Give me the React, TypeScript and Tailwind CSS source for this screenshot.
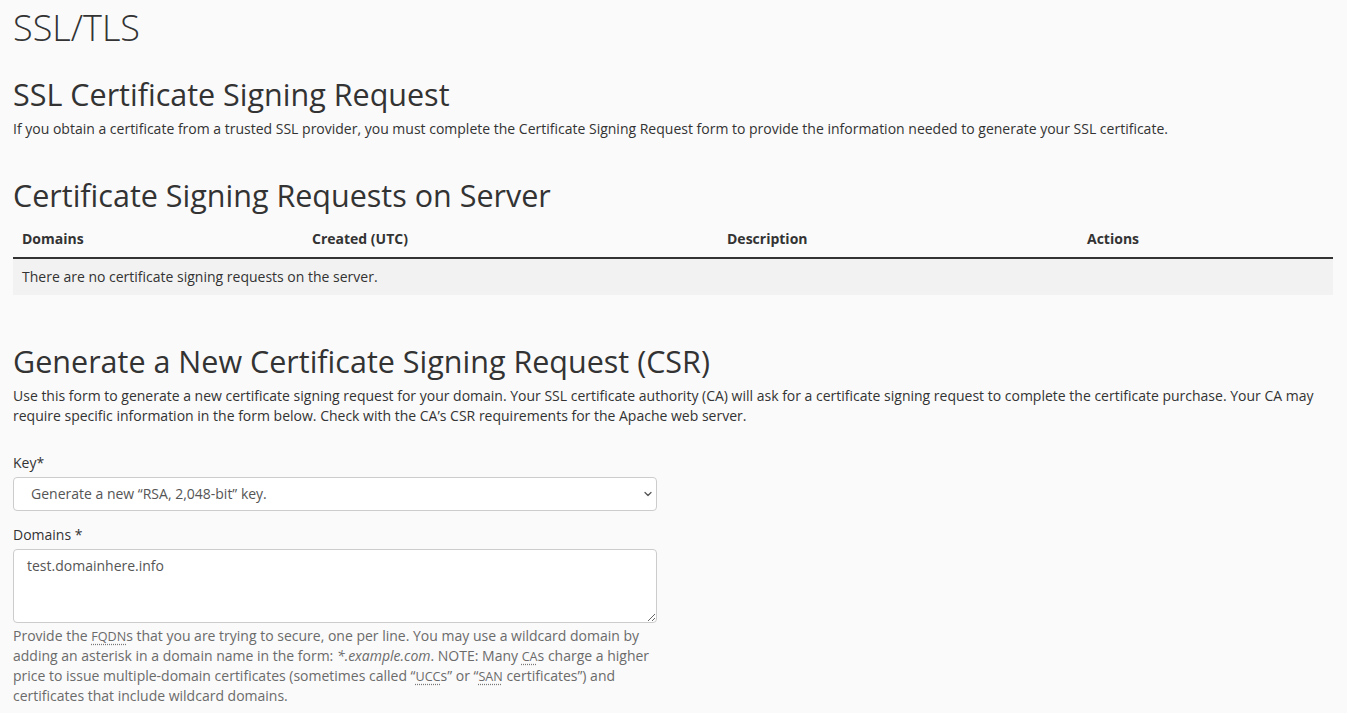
import { ChevronDown } from "lucide-react";

const Abbr = ({ children, title }: { children: React.ReactNode; title: string }) => (
  <abbr
    title={title}
    className="text-[90%] leading-none underline decoration-dotted decoration-[#777] underline-offset-[3px]"
  >
    {children}
  </abbr>
);

const columns = [
  { label: "Domains", width: "w-[290px]" },
  { label: "Created (UTC)", width: "w-[415px]" },
  { label: "Description", width: "w-[360px]" },
  { label: "Actions", width: "" },
];

export default function App() {
  return (
    <div
      className="min-h-screen bg-[#fafafa] text-[#333] text-[14px] leading-[20px] pl-[13px] pr-[14px] pt-[7px] pb-10"
      style={{ fontFamily: '"Open Sans", "Liberation Sans", sans-serif' }}
    >
      <h1 className="text-[36px] leading-[42px] font-light">SSL/TLS</h1>

      <h2 className="mt-[29px] text-[30.5px] leading-[33px]">SSL Certificate Signing Request</h2>
      <p className="mt-[8px]">
        If you obtain a certificate from a trusted SSL provider, you must complete the Certificate Signing Request form to
        provide the information needed to generate your SSL certificate.
      </p>

      <h2 className="mt-[40px] text-[30.5px] leading-[33px]">Certificate Signing Requests on Server</h2>
      <table className="mt-[9px] w-full table-fixed border-collapse">
        <thead>
          <tr className="border-b-2 border-[#333]">
            {columns.map((c) => (
              <th key={c.label} className={`${c.width} text-left font-bold px-[9px] py-[8px]`}>
                {c.label}
              </th>
            ))}
          </tr>
        </thead>
        <tbody>
          <tr className="bg-[#f2f2f2]">
            <td colSpan={4} className="px-[9px] py-[8px]">
              There are no certificate signing requests on the server.
            </td>
          </tr>
        </tbody>
      </table>

      <h2 className="mt-[50px] text-[30.5px] leading-[33px]">Generate a New Certificate Signing Request (CSR)</h2>
      <p className="mt-[8px]">
        Use this form to generate a new certificate signing request for your domain. Your SSL certificate authority (CA)
        will ask for a certificate signing request to complete the certificate purchase. Your CA may require specific
        information in the form below. Check with the CA’s CSR requirements for the Apache web server.
      </p>

      <div className="w-[644px]">
        <label className="block mt-[27px]">Key*</label>
        <div className="relative mt-[4px]">
          <select className="appearance-none w-full h-[34px] rounded-[4px] border border-[#ccc] bg-white pl-[17px] pr-8 text-[#555] outline-none">
            <option>Generate a new “RSA, 2,048-bit” key.</option>
          </select>
          <ChevronDown
            className="absolute right-[3px] top-[11px] w-[12px] h-[12px] text-[#555] pointer-events-none"
            strokeWidth={2.5}
          />
        </div>

        <label className="block mt-[14px]">Domains *</label>
        <textarea
          defaultValue="test.domainhere.info"
          className="block mt-[4px] w-full h-[74px] rounded-[4px] border border-[#ccc] bg-white px-[13px] py-[6px] text-[#555] outline-none resize-y"
        />
        <p className="mt-[3px] text-[#6b6b6b]">
          Provide the <Abbr title="Fully Qualified Domain Name">FQDN</Abbr>s that you are trying to secure, one per line.
          You may use a wildcard domain by adding an asterisk in a domain name in the form:{" "}
          <em>*.example.com</em>. NOTE: Many <Abbr title="Certificate Authorities">CA</Abbr>s charge a higher price to
          issue multiple-domain certificates (sometimes called “<Abbr title="Unified Communications Certificate">UCC</Abbr>
          s” or “<Abbr title="Subject Alternative Name">SAN</Abbr> certificates”) and certificates that include wildcard
          domains.
        </p>
      </div>
    </div>
  );
}
